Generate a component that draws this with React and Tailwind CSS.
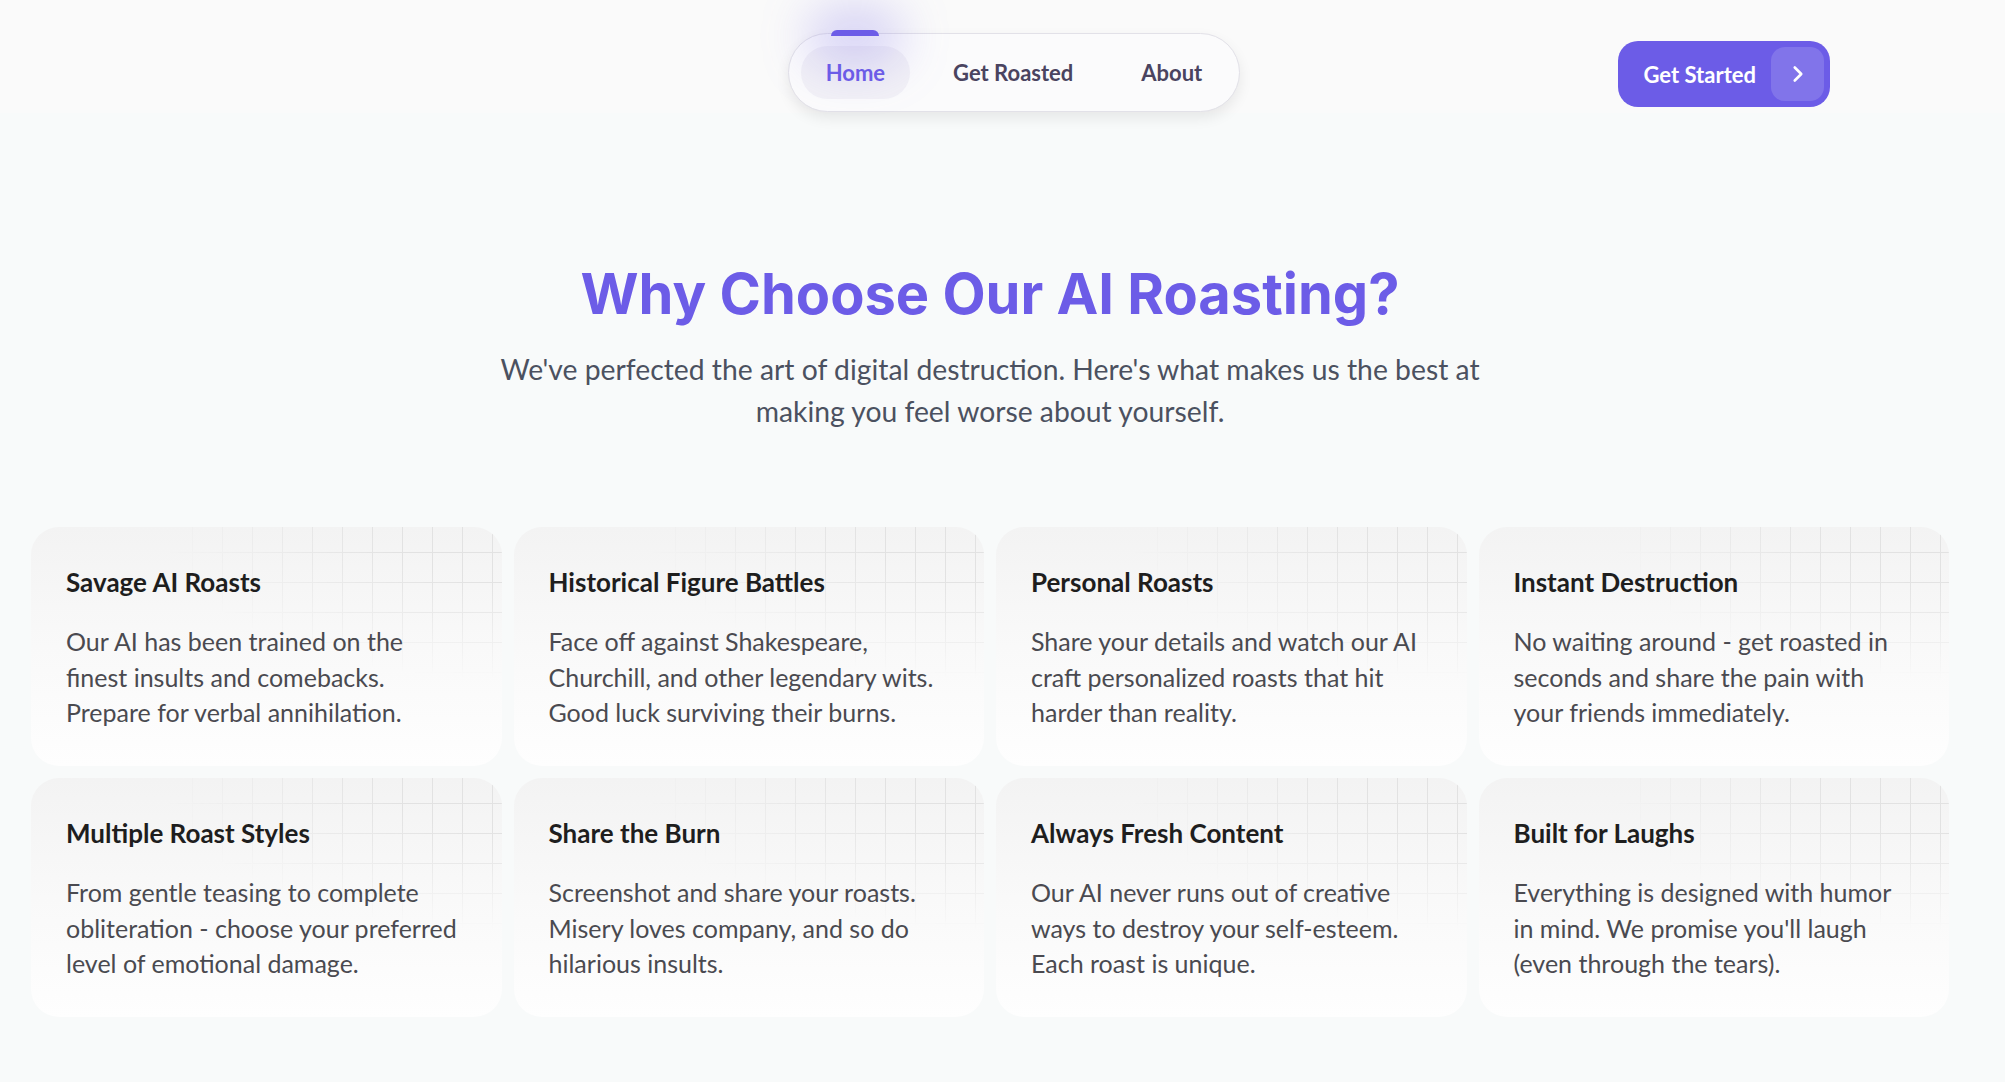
import React from 'react'
import { ChevronRight } from 'lucide-react'

const features = [
  {
    title: 'Savage AI Roasts',
    lines: ['Our AI has been trained on the', 'finest insults and comebacks.', 'Prepare for verbal annihilation.'],
  },
  {
    title: 'Historical Figure Battles',
    lines: ['Face off against Shakespeare,', 'Churchill, and other legendary wits.', 'Good luck surviving their burns.'],
  },
  {
    title: 'Personal Roasts',
    lines: ['Share your details and watch our AI', 'craft personalized roasts that hit', 'harder than reality.'],
  },
  {
    title: 'Instant Destruction',
    lines: ['No waiting around - get roasted in', 'seconds and share the pain with', 'your friends immediately.'],
  },
  {
    title: 'Multiple Roast Styles',
    lines: ['From gentle teasing to complete', 'obliteration - choose your preferred', 'level of emotional damage.'],
  },
  {
    title: 'Share the Burn',
    lines: ['Screenshot and share your roasts.', 'Misery loves company, and so do', 'hilarious insults.'],
  },
  {
    title: 'Always Fresh Content',
    lines: ['Our AI never runs out of creative', 'ways to destroy your self-esteem.', 'Each roast is unique.'],
  },
  {
    title: 'Built for Laughs',
    lines: ['Everything is designed with humor', "in mind. We promise you'll laugh", '(even through the tears).'],
  },
]

function Nav() {
  return (
    <nav className="flex items-center gap-[18px] rounded-full border border-[#e2e1e8] bg-[#fbfbfc] p-[12px] shadow-[0_6px_14px_rgba(0,0,0,0.08)]">
      <a className="relative rounded-full bg-[#f2f1f6] px-[25px] py-[11px] text-[22px] leading-[31px] font-bold text-[#6c5ce7]">
        <span className="absolute -top-[40px] left-1/2 h-[60px] w-[96px] -translate-x-1/2 rounded-full bg-[#6c5ce7]/25 blur-xl" />
        <span className="absolute -top-[16px] left-1/2 h-[6px] w-[48px] -translate-x-1/2 rounded-t-full bg-[#6c5ce7]" />
        <span className="relative">Home</span>
      </a>
      <a className="rounded-full px-[25px] py-[11px] text-[22px] leading-[31px] font-bold text-[#4a4460]">Get Roasted</a>
      <a className="rounded-full px-[25px] py-[11px] text-[22px] leading-[31px] font-bold text-[#4a4460]">About</a>
    </nav>
  )
}

function FeatureCard({ title, lines }) {
  return (
    <div className="relative h-[239px] overflow-hidden rounded-[28px] bg-linear-to-b from-[#f3f3f3] via-[#f9f9f9] to-[#fefefe]">
      <div className="absolute inset-0 bg-[linear-gradient(to_right,#e2e2e2_1px,transparent_1px),linear-gradient(to_bottom,#e2e2e2_1px,transparent_1px)] bg-[size:30px_30px] bg-[position:-19px_-5px] [mask-image:radial-gradient(ellipse_85%_75%_at_100%_0%,#000_30%,transparent_85%)]" />
      <div className="relative px-[35px] pt-[35px]">
        <h3 className="text-[26px] leading-[40px] font-bold text-[#1e1e1e]">{title}</h3>
        <p className="mt-[22px] text-[25px] leading-[35.5px] text-[#4a4a50]">
          {lines.map((line) => (
            <span key={line} className="block whitespace-nowrap">{line}</span>
          ))}
        </p>
      </div>
    </div>
  )
}

export default function App() {
  return (
    <div className="min-h-screen bg-[#f8fafa] font-['Lato','Liberation_Sans',sans-serif]">
      <header className="flex h-[113px] items-start bg-[#fafafa] pt-[33px] pl-[198px] pr-[175px]">
        <div className="flex-1" />
        <Nav />
        <div className="flex flex-1 justify-end pt-[8px]">
          <button className="flex items-center gap-[15px] rounded-[20px] bg-[#6c5ce7] py-[6px] pl-[26px] pr-[6px] text-[22px] font-bold text-white">
            <span>Get Started</span>
            <span className="flex h-[54px] w-[53px] items-center justify-center rounded-[14px] bg-white/15">
              <ChevronRight size={26} strokeWidth={2.4} />
            </span>
          </button>
        </div>
      </header>

      <main className="pb-[60px] pl-[31px] pr-[56px]">
        <section className="pt-[149px] text-center">
          <h2 className="font-['Inter',sans-serif] text-[56px] leading-[64px] font-bold text-[#6c5ce7]">
            Why Choose Our AI Roasting?
          </h2>
          <p className="mt-[22px] text-[28.3px] leading-[42px] text-[#4b5160]">
            We've perfected the art of digital destruction. Here's what makes us the best at
            <br />
            making you feel worse about yourself.
          </p>
        </section>

        <div className="mt-[95px] grid grid-cols-4 gap-3">
          {features.map((f) => (
            <FeatureCard key={f.title} title={f.title} lines={f.lines} />
          ))}
        </div>
      </main>
    </div>
  )
}
